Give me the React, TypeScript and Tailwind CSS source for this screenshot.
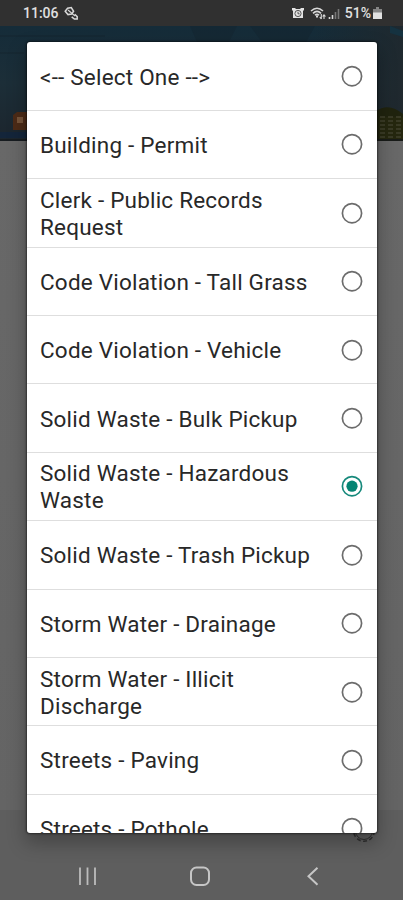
import React from "react";

const options: string[][] = [
  ["<-- Select One -->"],
  ["Building - Permit"],
  ["Clerk - Public Records", "Request"],
  ["Code Violation - Tall Grass"],
  ["Code Violation - Vehicle"],
  ["Solid Waste - Bulk Pickup"],
  ["Solid Waste - Hazardous", "Waste"],
  ["Solid Waste - Trash Pickup"],
  ["Storm Water - Drainage"],
  ["Storm Water - Illicit", "Discharge"],
  ["Streets - Paving"],
  ["Streets - Pothole"],
];

function Radio({ checked }: { checked: boolean }) {
  return (
    <svg className="size-[22px] shrink-0" viewBox="0 0 22 22" fill="none">
      <circle cx="11" cy="11.2" r="9.6" strokeWidth="1.7" stroke={checked ? "#16897b" : "#6c6c6c"} />
      {checked && <circle cx="11" cy="11.2" r="5.6" fill="#058473" />}
    </svg>
  );
}

function StatusBar() {
  return (
    <div className="flex h-[26px] items-center bg-[#303030] pr-[21px] pl-[23px] text-[14px] font-medium text-[#e0e0e0]">
      <span>11:06</span>
      <svg className="ml-[5px] h-[15px] w-[15px]" viewBox="0 0 15 15" fill="none" stroke="#d8d8d8" strokeWidth="1.5">
        <path d="M1.2 5.2 3.6 2.2 7.3 1.5 9.6 5.3 7.7 8 4 8.6Z" />
        <path d="M4 4 11 10" strokeWidth="1.1" />
        <path d="M10.7 8.3 13.2 10.6V13H10.4L7.7 10.8" />
      </svg>
      <span className="grow" />
      <svg className="mr-[6px] h-[12px] w-[12px]" viewBox="0 0 12 12" fill="none">
        <path d="M0 1H3L4 2H8L9 1H12V3L11 4V11H1V4L0 3Z" fill="#e2e2e2" />
        <circle cx="6" cy="6.5" r="3.1" stroke="#444" strokeWidth="0.9" />
        <path d="M6 4.8V6.8H7.6" stroke="#444" strokeWidth="0.9" />
      </svg>
      <svg className="mr-[5px] h-[14px] w-[30px]" viewBox="0 0 30 14" fill="none" stroke="#d8d8d8" strokeWidth="1.6">
        <path d="M1 5Q7-0.5 13 5M3 7.3Q7 3.5 11 7.3M5 9.3Q7 7.3 9 9.3" />
        <path d="M7 9.5V11.5" strokeWidth="2" />
        <path d="M11.3 8V13M9.8 11.2 11.3 13M14 13V8.5M12.6 10.5 14 8.8 15.5 10.5" strokeWidth="1.1" />
        <path d="M19.5 13V11M22.5 13V9" />
        <path d="M25.5 13V6M28.5 13V3" stroke="#777" />
      </svg>
      <span>51%</span>
      <svg className="ml-[2px] h-[12px] w-[9px]" viewBox="0 0 9 12">
        <path d="M3 0H6V2H9V12H0V2H3Z" fill="#858585" />
        <path d="M0 5.5H9V12H0Z" fill="#e2e2e2" />
      </svg>
    </div>
  );
}

function CityBanner() {
  return (
    <svg className="block h-[115px] w-full" viewBox="0 0 403 115" preserveAspectRatio="none">
      <defs>
        <linearGradient id="sky" x1="0" y1="0" x2="0" y2="1">
          <stop offset="0" stopColor="#152c39" />
          <stop offset="0.5" stopColor="#1c2e38" />
          <stop offset="1" stopColor="#1c252d" />
        </linearGradient>
        <linearGradient id="dusk" x1="0" y1="0" x2="1" y2="0">
          <stop offset="0.78" stopColor="#20282d" stopOpacity="0" />
          <stop offset="1" stopColor="#20282d" stopOpacity="0.85" />
        </linearGradient>
      </defs>
      <rect width="403" height="115" fill="url(#sky)" />
      <rect width="403" height="115" fill="url(#dusk)" />
      <path d="M0 27H24M0 10H105" stroke="#152128" strokeWidth="1" opacity="0.5" />
      <path d="M190 0H237L229 16H197ZM250 0H315L306 16H262Z" fill="#13242e" opacity="0.4" />
      <path d="M390 0 403 5V11L390 7Z" fill="#153240" />
      <rect y="106" width="28" height="6" fill="#14253a" />
      <path d="M13 89 17 86H27V104H13Z" fill="#4c2b17" />
      <path d="M17 91H23V97H17Z" fill="#76543a" />
      <path d="M376 85Q389 76 403 88V115H376Z" fill="#20230e" />
      <path d="M379 91H403V113H379Z" fill="#25270f" />
      <path d="M380 91H401M380 95H401M380 99H401M380 103H401M380 107H401M380 111H401" stroke="#40422e" strokeWidth="1.5" strokeDasharray="5 3" />
      <rect y="113" width="403" height="2" fill="#151a1c" opacity="0.75" />
    </svg>
  );
}

function NavigationBar() {
  return (
    <div className="flex h-[90px] items-start justify-between bg-[#5e5e5e] px-[77px] pt-[55px]">
      <svg className="h-[22px] w-[21px]" viewBox="0 0 21 22" fill="none" stroke="#bcbcbc" strokeWidth="1.8">
        <path d="M3 2.5V20M10.5 2.5V20M18 2.5V20" />
      </svg>
      <svg className="-ml-[4px] h-[22px] w-[22px]" viewBox="0 0 22 22" fill="none" stroke="#c6c6c6" strokeWidth="2">
        <rect x="2" y="2.5" width="18" height="17.5" rx="5.5" />
      </svg>
      <svg className="mr-[6px] h-[22px] w-[14px]" viewBox="0 0 14 22" fill="none" stroke="#c6c6c6" strokeWidth="2">
        <path d="M11.5 2.7 2.5 11.2 11.5 19.7" />
      </svg>
    </div>
  );
}

export default function App() {
  return (
    <div className="relative flex h-[900px] w-[403px] flex-col overflow-hidden bg-[#646464] font-['Roboto',sans-serif]">
      <StatusBar />
      <CityBanner />
      <div className="grow bg-linear-to-b from-[#686868] to-[#646464]" />
      <NavigationBar />
      <svg className="absolute top-[819px] left-[352px] size-[24px]" viewBox="0 0 24 24" fill="none" stroke="#303030" strokeWidth="1.6">
        <circle cx="12" cy="12" r="10.3" strokeDasharray="4 2.5" />
        <circle cx="12" cy="12" r="8.5" strokeWidth="1" />
      </svg>
      <div className="absolute top-[42px] left-[27px] h-[791px] w-[350px] overflow-hidden rounded-[3px] bg-white pt-[0.4px] shadow-[0_9px_18px_2px_rgba(0,0,0,0.25),0_0_2px_1px_rgba(0,0,0,0.45)]">
        {options.map((lines) => (
          <div key={lines[0]} className="flex h-[68.4px] items-center justify-between border-b border-[#dedede] pr-[14px] pl-[13px]">
            <span className="pt-[2px] text-[22.5px] leading-[27px] tracking-[0.21px] whitespace-nowrap text-[#282828]">
              {lines.map((line) => (
                <span key={line} className="block">{line}</span>
              ))}
            </span>
            <Radio checked={lines[0] === "Solid Waste - Hazardous"} />
          </div>
        ))}
      </div>
    </div>
  );
}
